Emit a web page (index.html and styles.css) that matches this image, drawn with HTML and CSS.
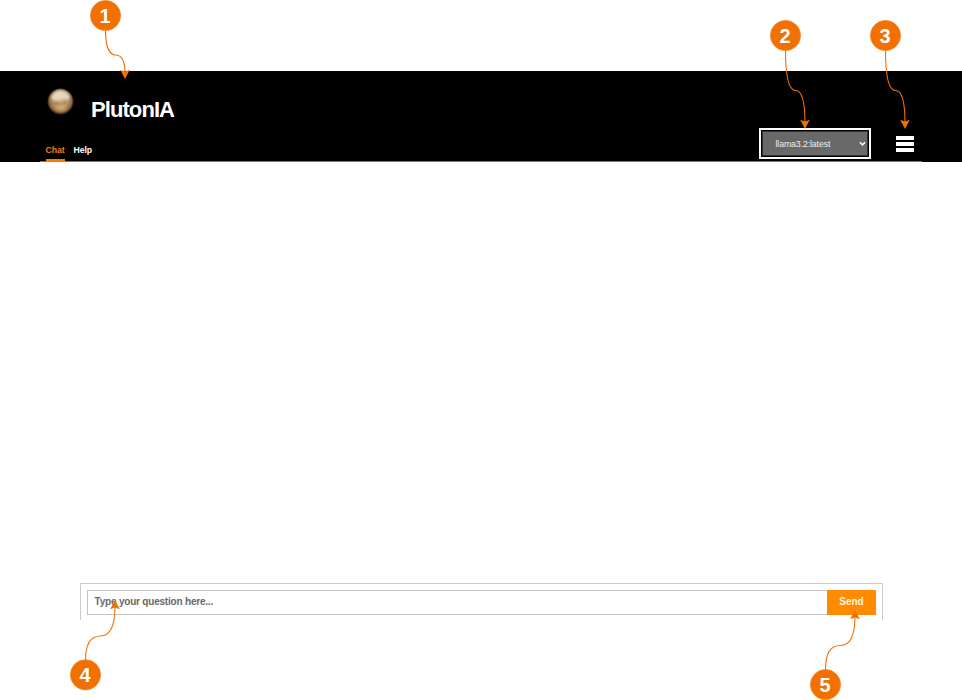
FILE: index.html
```html
<!DOCTYPE html>
<html lang="en">
<head>
<meta charset="utf-8">
<title>PlutonIA</title>
<link rel="stylesheet" href="styles.css">
</head>
<body>
<div class="page">
  <header class="header">
    <div class="brand">
      <svg class="logo" width="28" height="28" viewBox="0 0 28 28" aria-hidden="true">
        <defs>
          <radialGradient id="planet" cx="50%" cy="50%" r="50%" fx="51%" fy="36%">
            <stop offset="0" stop-color="#dcc09a"/>
            <stop offset=".55" stop-color="#bd976b"/>
            <stop offset=".85" stop-color="#8a643c"/>
            <stop offset="1" stop-color="#120a04"/>
          </radialGradient>
          <filter id="soft" x="-30%" y="-30%" width="160%" height="160%"><feGaussianBlur stdDeviation=".8"/></filter>
        </defs>
        <circle cx="13.500" cy="13.500" r="13.300" fill="url(#planet)"/>
        <g filter="url(#soft)">
          <path d="M4 10Q6 3 13 2.300Q20 2.500 23 9L21 12L16 10L11 12L6 12Z" fill="#eadfce" opacity=".85"/>
          <path d="M5 15L10 14L14 15L19 13L21 14L18 16L12 16.500L7 17Z" fill="#94703f" opacity=".6"/>
          <path d="M7 19L13 17.500L20 18L17 23L11 23Z" fill="#d3ad7d" opacity=".65"/>
        </g>
      </svg>
      <h1 class="title">PlutonIA</h1>
    </div>
    <div class="toolbar">
      <nav class="tabs">
        <a class="tab active">Chat</a>
        <a class="tab">Help</a>
      </nav>
      <div class="controls">
        <div class="model">
          <span>llama3.2:latest</span>
          <svg width="7" height="6" viewBox="0 0 7 6"><path d="M1 1.300L3.500 3.900L6 1.300" fill="none" stroke="#fff" stroke-width="1.500"/></svg>
        </div>
        <div class="burger"><i></i><i></i><i></i></div>
      </div>
    </div>
  </header>
  <main class="chat"></main>
  <form class="composer">
    <div class="question">Type your question here...</div>
    <div class="send">Send</div>
  </form>
  <svg class="callouts" width="962" height="700" viewBox="0 0 962 700">
    <defs>
      <path id="head" d="M0 0L-4.800 -9.200L0 -7.600L4.800 -9.200Z"/>
    </defs>
    <g class="lines">
      <path d="M105.500 30C105.500 46 109 55 115.500 55S125 62 125 73"/>
      <path d="M785.500 50C785.500 77 789 90.500 795.500 90.500S805 103 805 123"/>
      <path d="M885.500 50C885.500 77 889 90.500 895.500 90.500S905 103 905 123"/>
      <path d="M85.500 660C85.500 644 90 636 100.500 636S115 623 115 606"/>
      <path d="M825.500 670C825.500 653 830 645.500 840.500 645.500S855 633 855 616"/>
    </g>
    <g class="heads">
      <use href="#head" x="125" y="79"/>
      <use href="#head" x="805" y="129"/>
      <use href="#head" x="905" y="129"/>
      <use href="#head" transform="translate(115 600) rotate(180)"/>
      <use href="#head" transform="translate(855 610) rotate(180)"/>
    </g>
    <g class="discs">
      <circle cx="105.500" cy="15.500" r="15.100"/>
      <circle cx="785.500" cy="35.500" r="15.100"/>
      <circle cx="885.500" cy="35.500" r="15.100"/>
      <circle cx="85.500" cy="674.800" r="15.100"/>
      <circle cx="825.500" cy="684.600" r="15.100"/>
    </g>
    <g class="numbers">
      <text x="105" y="23">1</text>
      <text x="785" y="43">2</text>
      <text x="885" y="43">3</text>
      <text x="85" y="682">4</text>
      <text x="825" y="692">5</text>
    </g>
  </svg>
</div>
</body>
</html>
```
FILE: styles.css
```css
* { box-sizing: border-box; }

body {
  margin: 0;
  background: #fff;
  font-family: "Liberation Sans", Arial, sans-serif;
}

.page {
  position: relative;
  display: flex;
  flex-direction: column;
  height: 700px;
  padding: 71px 0 80px;
  overflow: hidden;
}

.header {
  display: flex;
  flex-direction: column;
  flex: none;
  height: 91px;
  padding: 17px 40px 0;
  background: #000;
}

.brand {
  display: flex;
  height: 40px;
  padding-left: 7px;
}

.title {
  margin: 9px 0 0 16px;
  color: #fff;
  font-size: 22px;
  line-height: 26px;
  font-weight: bold;
  letter-spacing: -0.92px;
}

.toolbar {
  display: flex;
  justify-content: space-between;
  height: 34px;
  padding: 0 8.5px 0 5.5px;
  border-bottom: 1px solid #777;
}

.tabs {
  display: flex;
  gap: 9px;
  padding-top: 15px;
}

.tab {
  height: 19px;
  color: #fff;
  font-size: 8.7px;
  line-height: 14px;
  font-weight: bold;
  letter-spacing: -0.08px;
}

.tab.active {
  color: #f57c0c;
  border-bottom: 3px solid #ff7900;
}

.controls {
  display: flex;
  gap: 25px;
}

.model {
  display: flex;
  align-items: center;
  justify-content: space-between;
  width: 112px;
  height: 31px;
  padding: 0 3px 0 15px;
  border: 2px solid #fff;
  background: #696969;
  box-shadow: inset 0 0 0 1px #000, inset 0 0 0 2px #333;
  color: #eee;
  font-size: 8.8px;
  letter-spacing: -0.13px;
}

.burger {
  display: flex;
  flex-direction: column;
  gap: 2px;
  width: 18px;
  padding-top: 8px;
}

.burger i {
  height: 4px;
  background: #fff;
}

.chat { flex: 1; }

.composer {
  display: flex;
  flex: none;
  width: 803px;
  height: 37px;
  margin: 0 0 0 80px;
  padding: 6px 6px 0;
  border: 1px solid #ccc;
  border-bottom: 0;
}

.question {
  flex: 1;
  height: 25px;
  padding-left: 6.5px;
  border: 1px solid #c4c4c4;
  border-right: 0;
  color: #696969;
  font-size: 10px;
  line-height: 22px;
  font-weight: bold;
  letter-spacing: -0.2px;
}

.send {
  width: 49px;
  height: 25px;
  background: #ff8c00;
  color: #fff5e5;
  font-size: 10px;
  line-height: 24px;
  font-weight: bold;
  text-align: center;
}

.callouts {
  position: absolute;
  top: 0;
  left: 0;
}

.lines {
  fill: none;
  stroke: #f17005;
  stroke-width: 1.1;
}

.heads { fill: #f07000; }

.discs {
  fill: #f27000;
  stroke: #f58a2a;
  stroke-width: 0.8;
}

.numbers {
  fill: #fff;
  font-size: 20px;
  font-weight: bold;
  text-anchor: middle;
}
```
